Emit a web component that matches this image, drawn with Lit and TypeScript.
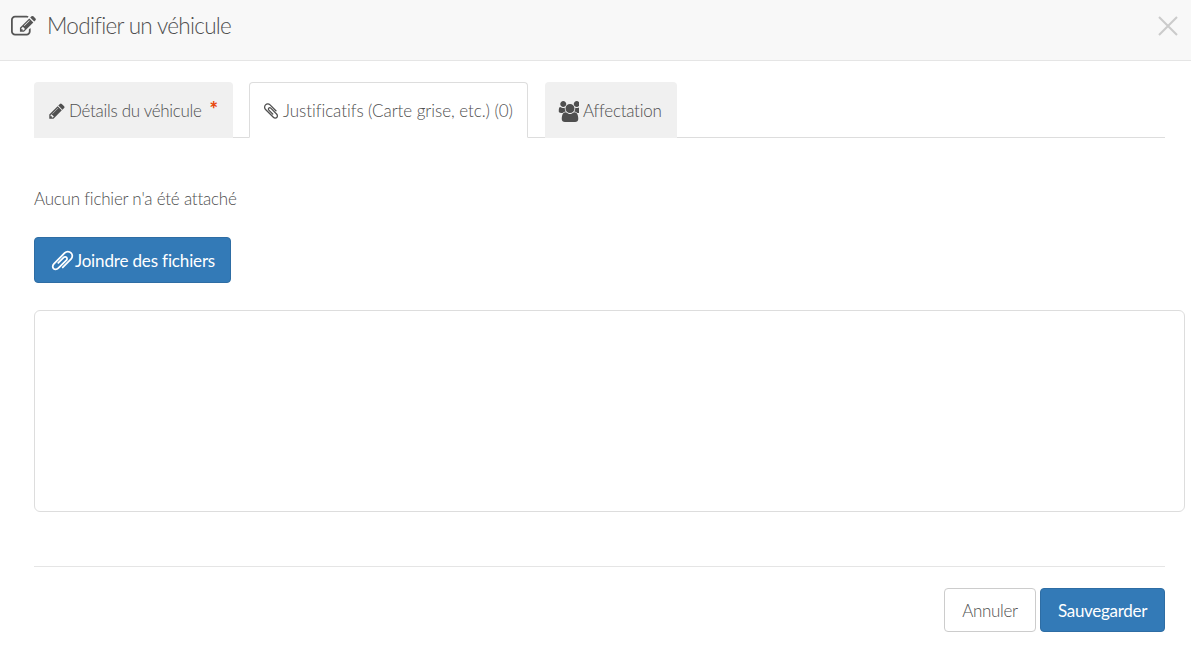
import { LitElement, html, css, svg } from "lit";
import { customElement } from "lit/decorators.js";

const P = {
  edit: "M888 1184l116-116-152-152-116 116v56h96v96h56zm440-720q-16-16-33 1l-350 350q-17 17-1 33t33-1l350-350q17-17 1-33zm80 594v190q0 119-84.5 203.5t-203.5 84.5h-832q-119 0-203.5-84.5t-84.5-203.5v-832q0-119 84.5-203.5t203.5-84.5h832q63 0 117 25 15 7 18 23 3 17-9 29l-49 49q-14 14-32 8-23-6-45-6h-832q-66 0-113 47t-47 113v832q0 66 47 113t113 47h832q66 0 113-47t47-113v-126q0-13 9-22l64-64q15-15 35-7t20 29zm-96-738l288 288-672 672h-288v-288zm444 132l-92 92-288-288 92-92q28-28 68-28t68 28l152 152q28 28 28 68t-28 68z",
  pencil: "M491 1536l91-91-235-235-91 91v107h128v128h107zm523-928q0-22-22-22-10 0-17 7l-542 542q-7 7-7 17 0 22 22 22 10 0 17-7l542-542q7-7 7-17zm-54-192l416 416-832 832h-416v-416zm683 96q0 53-37 90l-166 166-416-416 166-165q36-38 90-38 53 0 91 38l235 234q37 39 37 91z",
  clip: "M1596 1385q0 117-79 196t-196 79q-135 0-235-100l-777-776q-113-115-113-271 0-159 110-270t269-111q158 0 273 113l605 606q10 10 10 22 0 16-30.5 46.5t-46.5 30.5q-13 0-23-10l-606-607q-79-77-181-77-106 0-179 75t-73 181q0 105 76 181l776 777q63 63 145 63 64 0 106-42t42-106q0-82-63-145l-581-581q-26-24-60-24-29 0-48 19t-19 48q0 32 25 59l410 410q10 10 10 22 0 16-31 47t-47 31q-12 0-22-10l-410-410q-63-61-63-149 0-82 57-139t139-57q88 0 149 63l581 581q100 98 100 235z",
  group: "M657 896q-162 5-265 128h-134q-82 0-138-40.5t-56-118.5q0-353 124-353 6 0 43.5 21t97.5 42.5 119 21.5q67 0 133-23-5 37-5 66 0 139 81 256zm1071 637q0 120-73 189.5t-194 69.5h-874q-121 0-194-69.5t-73-189.5q0-53 3.5-103.5t14-109 26.5-108.5 43-97.5 62-81 85.5-53.5 111.5-20q10 0 43 21.5t73 48 107 48 135 21.5 135-21.5 107-48 73-48 43-21.5q61 0 111.5 20t85.5 53.5 62 81 43 97.5 26.5 108.5 14 109 3.5 103.5zm-1024-1277q0 106-75 181t-181 75-181-75-75-181 75-181 181-75 181 75 75 181zm704 384q0 159-112.5 271.5t-271.5 112.5-271.5-112.5-112.5-271.5 112.5-271.5 271.5-112.5 271.5 112.5 112.5 271.5zm576 225q0 78-56 118.5t-138 40.5h-134q-103-123-265-128 81-117 81-256 0-29-5-66 66 23 133 23 59 0 119-21.5t97.5-42.5 43.5-21q124 0 124 353zm-128-609q0 106-75 181t-181 75-181-75-75-181 75-181 181-75 181 75 75 181z",
};

const icon = (d: string, cls: string) =>
  html`<svg class=${cls} viewBox="0 0 1792 1792" aria-hidden="true">${svg`<path fill="currentColor" d=${d}></path>`}</svg>`;

@customElement("app-root")
export class AppRoot extends LitElement {
  static styles = css`
    :host {
      display: block;
      width: 1191px;
      height: 649px;
      overflow: hidden;
      background: #fff;
      color: #4f4f4f;
      font-family: "Lato", "Liberation Sans", sans-serif;
      font-weight: 300;
      font-size: 16px;
    }
    .header {
      height: 60px;
      box-sizing: content-box;
      background: #f8f8f8;
      border-bottom: 1px solid #e5e5e5;
      display: flex;
      align-items: center;
      padding: 0 11px 0 10px;
    }
    .header-icon { width: 25px; height: 25px; color: #555; margin: 0 11px 8px 1px; }
    .title { font-size: 22.5px; letter-spacing: -0.7px; flex: 1; margin-bottom: 10px; }
    .close { width: 24px; height: 24px; color: #cbcbcb; margin-bottom: 9px; }
    .body { padding: 21px 26px 0 34px; }
    .tabs {
      display: flex;
      height: 56px;
      box-shadow: inset 0 -1px 0 #ddd;
    }
    .tab {
      box-sizing: border-box;
      height: 56px;
      padding-top: 18px;
      padding-left: 14px;
      background: #f0f0f0;
      border-radius: 4px 4px 0 0;
      display: flex;
      align-items: flex-start;
      font-size: 17px;
      letter-spacing: -0.3px;
      line-height: 22px;
      white-space: nowrap;
    }
    .tab.details { width: 199px; margin-right: 16px; }
    .tab.just {
      width: 279px;
      margin-right: 17px;
      background: #fff;
      border: 1px solid #ddd;
      border-bottom-color: #fff;
      padding-top: 17px;
      padding-left: 12px;
      letter-spacing: -0.06px;
    }
    .tab.aff { width: 132px; letter-spacing: -0.25px; }
    .ti { width: 18px; height: 18px; margin: 2px 3px 0 0; flex: none; }
    .ti.g { width: 21px; height: 21px; margin: 1px 4px 0 -1px; }
    .star { color: #e8470a; font-weight: 900; font-size: 20px; margin-left: 8px; line-height: 18px; }
    .note { margin: 49px 0 0; font-size: 17px; letter-spacing: -0.22px; line-height: 24px; }
    .btn {
      box-sizing: border-box;
      display: flex;
      align-items: center;
      justify-content: center;
      border-radius: 4px;
      font-family: inherit;
      font-size: 17px;
      font-weight: 400;
      letter-spacing: -0.3px;
      padding: 0;
    }
    .primary { background: #337ab7; border: 1px solid #2e6da4; color: #fff; }
    .attach { width: 197px; height: 46px; margin-top: 26px; letter-spacing: -0.15px; }
    .attach svg { width: 25px; height: 25px; margin-right: 0; transform: rotate(90deg); }
    .box {
      box-sizing: border-box;
      height: 202px;
      width: calc(100% + 20px);
      margin-top: 27px;
      border: 1px solid #ddd;
      border-radius: 6px;
    }
    hr { border: 0; border-top: 1px solid #e5e5e5; margin: 54px 0 21px; }
    .actions { display: flex; justify-content: flex-end; gap: 4px; }
    .cancel { width: 92px; height: 44px; background: #fff; border: 1px solid #ccc; color: #4f4f4f; font-weight: 300; }
    .save { width: 125px; height: 44px; }
  `;

  render() {
    return html`
      <div class="header">
        ${icon(P.edit, "header-icon")}
        <div class="title">Modifier un véhicule</div>
        <svg class="close" viewBox="0 0 24 24" aria-hidden="true">
          <path d="M3 3 L21 21 M21 3 L3 21" stroke="currentColor" stroke-width="2" fill="none"></path>
        </svg>
      </div>
      <div class="body">
        <div class="tabs">
          <div class="tab details">${icon(P.pencil, "ti")}Détails du véhicule<span class="star">*</span></div>
          <div class="tab just">${icon(P.clip, "ti")}Justificatifs (Carte grise, etc.) (0)</div>
          <div class="tab aff">${icon(P.group, "ti g")}Affectation</div>
        </div>
        <p class="note">Aucun fichier n'a été attaché</p>
        <button class="btn primary attach">${icon(P.clip, "")}Joindre des fichiers</button>
        <div class="box"></div>
        <hr />
        <div class="actions">
          <button class="btn cancel">Annuler</button>
          <button class="btn primary save">Sauvegarder</button>
        </div>
      </div>
    `;
  }
}
